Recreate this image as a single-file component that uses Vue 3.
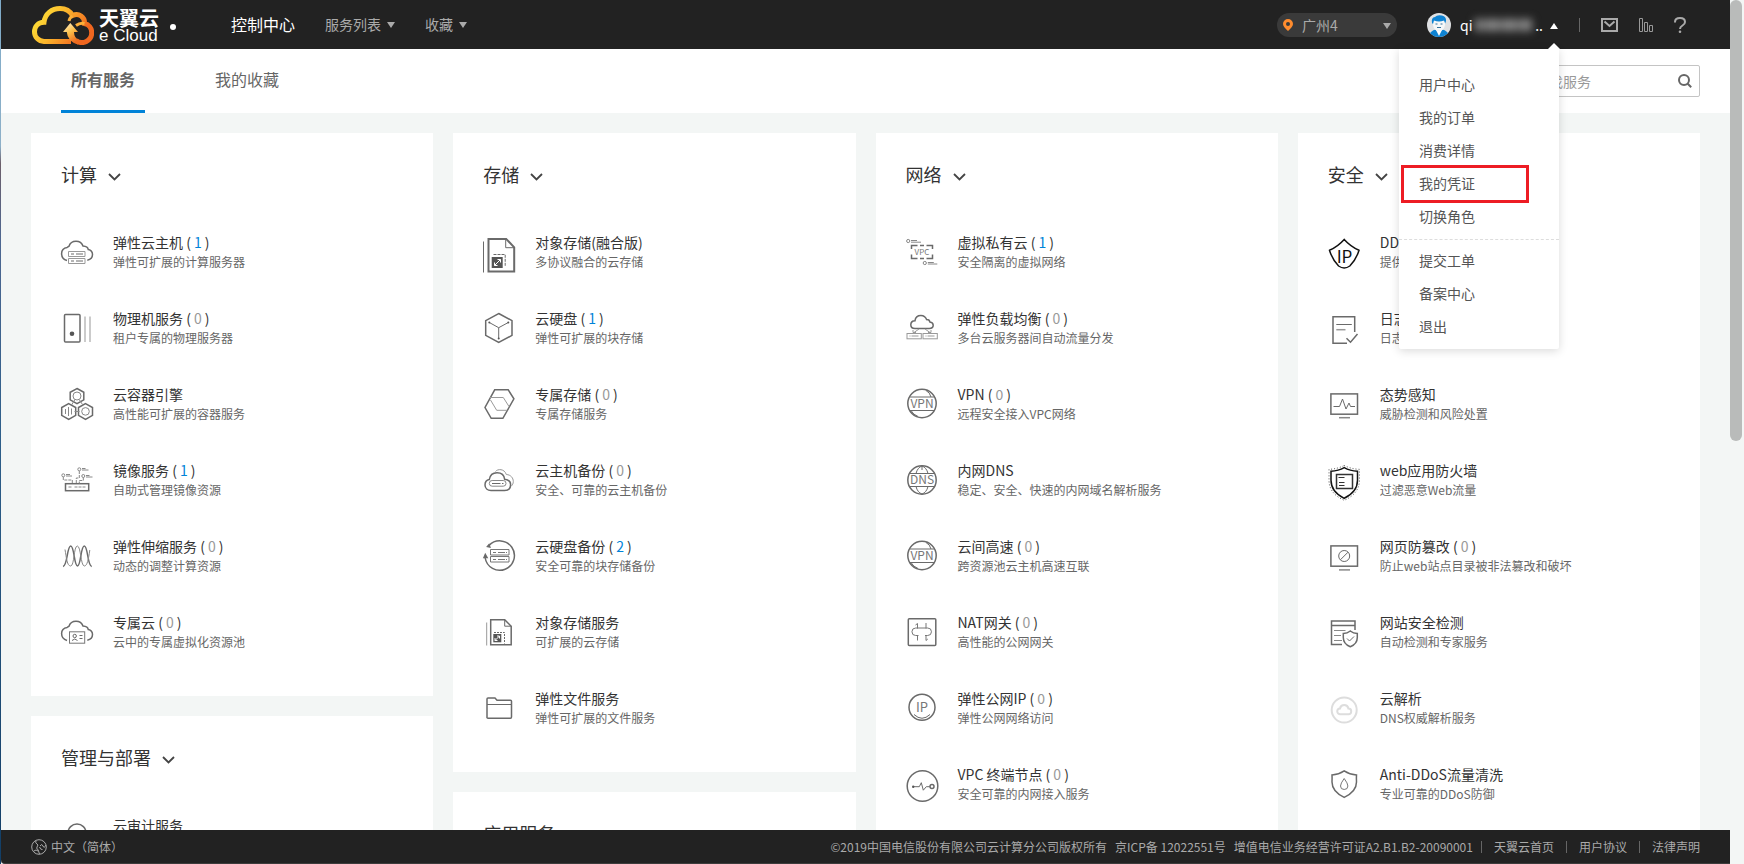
<script setup>
import { ref } from 'vue'

const CLOUD = '<path d="M6 23.5C2.6 22.6.6 20 .6 16.6c0-3.4 2.4-5.8 5.6-6.2L8 9.200C9 6 11.800 4.200 15 4.200c3.400 0 6 1.900 7 4.800 3.300.2 5 1.600 5.300 3.600 2.600.6 4.200 2.300 4.200 5 0 2.600-1.900 4.900-5.200 5.600"/>'
const VPN = '<circle cx="16" cy="14.500" r="14.200"/><path d="M3.500 8h25M3.500 21.500h25M20 1.500q4 2 5 6.500M5 21.500q2 4 7 6" stroke-width="1"/><text x="16" y="18.800" font-size="12">VPN</text>'
const DOC = '<path d="M7.700 2.700h14l6.500 6.500v18.500H7.700z"/><path d="M21.700 2.700v6.500h6.500" stroke-width="1"/><path d="M11 15.500h10.500v11" stroke-width="1" stroke-dasharray="2 1"/><path d="M3.700 5.500v23" stroke="#999" stroke-width="1"/><path d="M10.300 17h8v8.300h-8z" fill="#555" stroke="none"/><path d="M12 23.500l4.500-4.500M14 19h2.500v2.500M12 21v2.500h2.500" stroke="#fff" stroke-width="1"/>'

const icons = {
  server: CLOUD + '<path d="M7.500 14.500h16.500v5H7.500zM7.500 21.500h16.500v5H7.500z" stroke="#999" stroke-width="1"/><path d="M10 17h3m2 0h7M10 24h3m2 0h7" stroke-width="1"/>',
  physical: '<rect x="3.500" y="1.500" width="15.500" height="27.500" rx="1"/><circle cx="11" cy="20.700" r="2.300" fill="#555" stroke="none"/><path d="M24 3.500v25.500M29 3.500v25.500" stroke="#bbb"/>',
  container: '<path d="M16-.5l6.800 3.800v7.600L16 14.700l-6.800-3.800V3.300zM7.700 14.700l7 3.800v7.800l-7 4-7-4v-7.800zM24.500 14.700l7 3.800v7.800l-7 4-7-4v-7.800z"/><g stroke-width="1" stroke="#888"><circle cx="16" cy="7" r="4"/><circle cx="24.500" cy="22.400" r="3.800"/><path d="M14 10.500l-3.500 5.500M18.500 11l3 4.500M13.500 22.500h5M4.500 20v5M7.500 18v9M10.500 19.500v6"/></g>',
  image: '<rect x="4.500" y="18.700" width="23.200" height="7"/><path d="M7.500 22h4m2 0h12M2.300 12v3h9v3M18.300 6v7h-3v5M22.300 12.500v3h-4v3" stroke="#888" stroke-width="1" stroke-dasharray="3 1"/><g stroke="#888" stroke-width="1"><circle cx="2.300" cy="10.300" r="1.500"/><circle cx="18.300" cy="4.300" r="1.500"/><circle cx="22.300" cy="11" r="1.500"/><path d="M5 9.500h4M5 11h6M21 3.500h3.500M21 5h6.500M25 10.500h3.500M25 12h6.500"/></g>',
  scaling: '<path d="M2 25.500C6.500 25 6 5 9.700 5s3.300 20 6.800 20S19.600 5 23.300 5s3.200 20.500 7.500 20.500"/><path d="M4 8.500C5.500 17 6 25 9.700 25s3-20 6.600-20 3.400 20 7 20c3 0 4.200-7 5.500-16" stroke="#888" stroke-width="1"/>',
  dedicated: CLOUD + '<rect x="8.500" y="14.800" width="15.200" height="11.400" fill="#fff" stroke="#777" stroke-width="1"/><g stroke-width="1"><circle cx="13.700" cy="19" r="1.700"/><path d="M11 23.500q2.700-3 5.500 0M18.500 18.500h3M18.500 21.500h3"/></g>',
  audit: '<circle cx="16" cy="13" r="9"/><path d="M22 20l7 7"/>',
  objectFused: '<path d="M5.500 1.900h17.700l8 8.500v24H5.500z" stroke-width="2"/><path d="M22.700 2v8.700h8.500" stroke-width="1"/><path d="M10.500 17.500h11.700v12" stroke-dasharray="3 1" stroke-width="1"/><path d="M.5 4.500v31" stroke-width="1"/><path d="M8.700 20h11v11h-11z" fill="#555" stroke="none"/><path d="M11.500 28.500l6-6M14.500 22.500h3v3M11.500 25.500v3h3" stroke="#fff" stroke-width="1"/>',
  disk: '<path d="M15.700.5L29 7.600v14.800L15.700 29.500 2.700 22.400V7.600z"/><path d="M6.300 9.500l9.400 5.200 9.600-5.200M15.700 14.700v11" stroke-width="1"/><g fill="#555" stroke="none"><circle cx="6.300" cy="9.500" r="1"/><circle cx="25.300" cy="9.500" r="1"/><circle cx="15.700" cy="25.500" r="1"/></g>',
  dedicatedDisk: '<path d="M11.700.8h13.500l5.700 9-11 19.500H8.200L2 18.500z"/><path d="M7 8.500h13.300l5.700 9M7.500 11l6.200 10.300h10.500" stroke="#999" stroke-width="1"/>',
  cloudBackup: '<path d="M8 25.500c-3.500 0-6-2.300-6-5.500 0-3 1.700-5 4.300-5.500C7 10 9.700 7.700 14 7.700c4.200 0 7.200 2.400 7.600 6.500 3.700.5 6 2.500 6 5.500 0 3.500-2.300 5.800-6 5.800z"/><path d="M12.500 6.500c2-2.800 9-3 10.800 3 4.500.2 7 3.500 7 7 0 2-.8 3.500-2 4.500" stroke="#999" stroke-width="1"/><rect x="6.300" y="15.500" width="16.700" height="5.700" rx="2.800" stroke="#888" stroke-width="1"/><path d="M9 18.500h8.500m1.500 0h1.500" stroke-width="1"/>',
  diskBackup: '<path d="M6 4.500A14.700 14.700 0 1 1 2.200 17"/><path d="M1 16.500l1.300-3 1.700 3zM4.500 5.500l1.500-1.800.8 2.300z" fill="#555"/><g stroke="#777" stroke-width="1"><path d="M7.500 8.500h18.500v5.500H7.500zM7.500 15.500h18.500v5.500H7.500z"/><path d="M10 11.500h3m2 0h7m1 0h1M10 18.500h3m2 0h7m1 0h1"/></g>',
  object: DOC,
  folder: '<path d="M4 25V6q0-1 1-1h7l2 2.200h13.500q1 0 1 1V24q0 1.200-1 1.200H5q-1 0-1-1z"/><path d="M4 11.500h24.500" stroke-width="1"/>',
  vpc: '<path d="M5.500 12V8.500h6M14 8.500h4M20.500 8.500h6V12M5.500 17.500v4h6M20.500 21.500h6v-4M14 21.500h4"/><text x="16" y="18" font-size="8">VPC</text><g stroke="#888" stroke-width="1"><circle cx="2.200" cy="4" r="1.600"/><circle cx="18.800" cy="26" r="1.600"/><path d="M5 3.500h6M5 5.200h10M21.800 25.500h6M21.800 27h9.500"/></g>',
  elb: '<path d="M9 15.500c-2.700 0-4.200-1.600-4.200-3.800S6.500 7.800 9 7.700c.4-3.300 3-5.300 5.900-5.300 3 0 4.800 1.500 5.700 4.200 2-.1 3 .7 3.200 2.300 2 .3 3.400 1.500 3.400 3.400 0 2-1.700 3.200-4 3.200z"/><g stroke="#999" stroke-width="1"><rect x="1" y="20.500" width="14.300" height="5.300"/><rect x="17" y="20.500" width="14.300" height="5.300"/><path d="M3.500 23h1m1 0h7M19.500 23h1m1 0h7M13 16l-5 3.500M19 16l5 3.500M7 17v2.500h3M25 17v2.500h-3"/></g>',
  vpn: VPN,
  dns: '<circle cx="16" cy="15" r="14.200"/><path d="M3.300 8.500h25.400M3.300 21.500h25.400M16 1v4M10 8.500q1.500-6 6-7.500 4.500 1.500 6 7.500M10 21.500q1.500 6 6 7.500 4.500-1.500 6-7.500" stroke-width="1"/><text x="16" y="19" font-size="12">DNS</text>',
  nat: '<rect x="2.300" y="1.700" width="27.500" height="26.700" rx="1"/><path d="M11.500 11.500V6.500l-2 1.500M20 6v5.500M11.500 18.500v5M20 18.500v5l1.800-1.500M12.500 18.500H9.700a3.500 3.500 0 0 1 0-7.500h12a3.500 3.500 0 0 1 0 7.500H19" stroke="#777" stroke-width="1"/>',
  ip: '<circle cx="16" cy="14.300" r="13"/><path d="M8 21.500q8 7.500 16 0" stroke-width="1"/><text x="16" y="18.500" font-size="13">IP</text>',
  endpoint: '<circle cx="16.500" cy="17" r="15.300"/><path d="M7 17.700h6.300l2-4 2 7.500 3-3.500h3.500" stroke-width="1"/><circle cx="7.200" cy="17.700" r="1.200" fill="#555" stroke="none"/><circle cx="26" cy="17.500" r="2"/>',
  ddos: '<path d="M16.200 2.500Q22.500 9.500 31 13.300 28.500 22 21.800 29q-5.600 4-11.200 0Q4 22 1.500 13.300 10 9.500 16.200 2.500z" stroke="#111"/><text x="16.500" y="25.500" font-size="17" class="dark">IP</text>',
  log: '<path d="M26.700 19V3.700H5v26.500h14"/><path d="M8.300 11.500h15.500" stroke-width="1"/><path d="M8.300 16.700h9.200" stroke="#999"/><path d="M18.500 25.300l4 3.900L29.500 21"/>',
  situation: '<rect x="2.900" y="4.900" width="26.600" height="20.300"/><path d="M5.500 17.500h6l3-7.500 3.500 10 3-6 1.500 3.500h4.500" stroke-width="1"/><path d="M11 28.700h11" stroke="#888"/>',
  waf: '<path d="M16.200 2.700c4 2.300 8.500 3.400 13.300 3.600v9c0 8-5 14-13.300 18C8 29.300 3 23.300 3 15.300v-9c4.800-.2 9.200-1.300 13.200-3.600z" stroke="#111"/><path d="M16.200.5c4 2 9 3.600 15.200 3.800v11c0 9.500-6 16-15.200 20C7 31.300 1 24.800 1 15.300v-11C7.200 4.100 12.200 2.500 16.200.5z" stroke="#555" stroke-width="1" stroke-dasharray="1 2"/><path d="M8.500 9.500h16v14h-16z" stroke="#333"/><path d="M10.500 12.500h6M11 17.500h5.500M11 20.500h5.500" stroke="#333" stroke-width="1"/>',
  tamper: '<rect x="2.900" y="4.900" width="26.600" height="20.300"/><circle cx="16.200" cy="15" r="5.500" stroke-width="1"/><path d="M12.500 18.700l7.500-7.500" stroke-width="1"/><path d="M11 28.900h11" stroke="#888"/>',
  scan: '<path d="M27 13V4H3.500v23.500H14M3.500 8.500H27"/><path d="M6 13.500h11.500M6 18.500h7M6 23.500h8" stroke="#888" stroke-width="1"/><path d="M22.300 14q3 2.300 7 2.500v4q0 6.500-7 9.200-7-2.700-7-9.200v-4q4-.2 7-2.500z"/><path d="M19 21.500l2.500 2.500 4.500-4.500" stroke-width="1"/>',
  resolve: '<circle cx="16.200" cy="17" r="12.500" stroke="#ddd" stroke-width="2"/><path d="M12.300 21.300a2.900 2.900 0 0 1-.3-5.800 4.300 4.300 0 0 1 8.400 0 2.900 2.900 0 0 1-.2 5.800z" stroke="#ddd" stroke-width="2"/>',
  anti: '<path d="M16.200 1.800q5.500 3.700 12.300 4.200-.2 3 0 7 0 9.500-12.300 15.400Q4 22.500 4 13q.2-4 0-7 6.700-.5 12.200-4.200z"/><path d="M16.200 9.500q3.700 5 3.700 7.500a3.700 3.500 0 0 1-7.400 0q0-2.500 3.700-7.500z" stroke="#777" stroke-width="1"/>'
}

const columns = [
  [
    {
      title: '计算',
      items: [
        { icon: 'server', name: '弹性云主机', count: 1, desc: '弹性可扩展的计算服务器' },
        { icon: 'physical', name: '物理机服务', count: 0, desc: '租户专属的物理服务器' },
        { icon: 'container', name: '云容器引擎', desc: '高性能可扩展的容器服务' },
        { icon: 'image', name: '镜像服务', count: 1, desc: '自助式管理镜像资源' },
        { icon: 'scaling', name: '弹性伸缩服务', count: 0, desc: '动态的调整计算资源' },
        { icon: 'dedicated', name: '专属云', count: 0, desc: '云中的专属虚拟化资源池' }
      ]
    },
    { title: '管理与部署', items: [{ icon: 'audit', name: '云审计服务' }] }
  ],
  [
    {
      title: '存储',
      items: [
        { icon: 'objectFused', name: '对象存储(融合版)', desc: '多协议融合的云存储' },
        { icon: 'disk', name: '云硬盘', count: 1, desc: '弹性可扩展的块存储' },
        { icon: 'dedicatedDisk', name: '专属存储', count: 0, desc: '专属存储服务' },
        { icon: 'cloudBackup', name: '云主机备份', count: 0, desc: '安全、可靠的云主机备份' },
        { icon: 'diskBackup', name: '云硬盘备份', count: 2, desc: '安全可靠的块存储备份' },
        { icon: 'object', name: '对象存储服务', desc: '可扩展的云存储' },
        { icon: 'folder', name: '弹性文件服务', desc: '弹性可扩展的文件服务' }
      ]
    },
    { title: '应用服务', items: [] }
  ],
  [
    {
      title: '网络',
      items: [
        { icon: 'vpc', name: '虚拟私有云', count: 1, desc: '安全隔离的虚拟网络' },
        { icon: 'elb', name: '弹性负载均衡', count: 0, desc: '多台云服务器间自动流量分发' },
        { icon: 'vpn', name: 'VPN', count: 0, desc: '远程安全接入VPC网络' },
        { icon: 'dns', name: '内网DNS', desc: '稳定、安全、快速的内网域名解析服务' },
        { icon: 'vpn', name: '云间高速', count: 0, desc: '跨资源池云主机高速互联' },
        { icon: 'nat', name: 'NAT网关', count: 0, desc: '高性能的公网网关' },
        { icon: 'ip', name: '弹性公网IP', count: 0, desc: '弹性公网网络访问' },
        { icon: 'endpoint', name: 'VPC 终端节点', count: 0, desc: '安全可靠的内网接入服务' }
      ]
    }
  ],
  [
    {
      title: '安全',
      items: [
        { icon: 'ddos', name: 'DDoS', desc: '提供' },
        { icon: 'log', name: '日志', desc: '日志' },
        { icon: 'situation', name: '态势感知', desc: '威胁检测和风险处置' },
        { icon: 'waf', name: 'web应用防火墙', desc: '过滤恶意Web流量' },
        { icon: 'tamper', name: '网页防篡改', count: 0, desc: '防止web站点目录被非法篡改和破坏' },
        { icon: 'scan', name: '网站安全检测', desc: '自动检测和专家服务' },
        { icon: 'resolve', name: '云解析', desc: 'DNS权威解析服务' },
        { icon: 'anti', name: 'Anti-DDoS流量清洗', desc: '专业可靠的DDoS防御' }
      ]
    }
  ]
]

const menuGroups = [
  ['用户中心', '我的订单', '消费详情', '我的凭证', '切换角色'],
  ['提交工单', '备案中心', '退出']
]
const highlighted = '我的凭证'
const keyword = ref('')
</script>

<template>
  <div class="screen">
    <div class="page">
      <header class="topbar">
        <a class="logo" href="#">
          <svg class="logo-mark" viewBox="0 0 62 40" aria-hidden="true">
            <defs>
              <linearGradient id="gold" x1="0" y1="0" x2="1" y2="0.4">
                <stop offset="0" stop-color="#fdea3a" />
                <stop offset="0.5" stop-color="#fcb62c" />
                <stop offset="1" stop-color="#f0661f" />
              </linearGradient>
              <linearGradient id="arrow" x1="0" y1="0" x2="0.5" y2="1">
                <stop offset="0" stop-color="#fff6d8" />
                <stop offset="0.5" stop-color="#fdc04a" />
                <stop offset="1" stop-color="#ee6a1e" />
              </linearGradient>
            </defs>
            <path d="M39 36.500H12A10 9.500 0 0 1 2.500 27C2.500 21.500 6 17.500 12 17.300C13 8.500 20 3.500 28 3.500C33.500 3.500 38 6 40.500 10.500C47 7.500 53 12 52.500 18.500C57 19.500 59.700 23 59.700 27.500A9.800 9.800 0 0 1 44 35.500" fill="none" stroke="url(#gold)" stroke-width="5" />
            <path d="M40.500 11Q37.500 12.500 37 16M52.500 18.500Q48 17.500 44 20.500" fill="none" stroke="#fcb03a" stroke-width="3" />
            <path d="M38.300 18L46 27H42Q42 33 47.500 35.500L46 39.500Q35.500 36.500 34.800 27H31z" fill="url(#arrow)" />
          </svg>
          <span class="logo-words">
            <strong>天翼云</strong>
            <span>e Cloud</span>
          </span>
          <i class="logo-dot"></i>
        </a>
        <nav class="mainnav">
          <a class="home" href="#">控制中心</a>
          <a href="#">服务列表<i class="caret"></i></a>
          <a href="#">收藏<i class="caret"></i></a>
        </nav>
        <button class="region" type="button">
          <svg class="pin" viewBox="0 0 10 12" aria-hidden="true"><path d="M5 0a5 5 0 0 1 5 5c0 2.600-2.500 4.500-5 7C2.500 9.500 0 7.600 0 5a5 5 0 0 1 5-5zm0 3a2 2 0 1 0 0 4 2 2 0 0 0 0-4z" fill="#ff8c2e" fill-rule="evenodd" /></svg>
          <span>广州4</span>
          <i class="caret"></i>
        </button>
        <div class="account">
          <button class="user" type="button" aria-expanded="true">
            <svg class="avatar" viewBox="0 0 24 24" aria-hidden="true">
              <clipPath id="round"><circle cx="12" cy="12" r="12" /></clipPath>
              <g clip-path="url(#round)">
                <path d="M0 0h24v24H0z" fill="#dfe1e3" />
                <path d="M1 24Q3 17.500 9 16.500h6q6 1 8 7.500z" fill="#0e83d3" />
                <path d="M8.500 16h7L12 23z" fill="#fff" />
                <path d="M6 8h12v4q-1 6-6 6t-6-6z" fill="#f5f7f8" />
                <path d="M5 10Q4 4.500 8 4q2-2.500 7-1.500 4.500 1 4 5.500l-.8 2.500L17 7.500Q12 9.500 7 7.500L6 11z" fill="#0e83d3" />
                <path d="M8.500 11h2M13.500 11h2M10 14.500h4" stroke="#35739c" />
              </g>
            </svg>
            <span class="user-name">qi<i class="mask"></i>..</span>
            <i class="caret up"></i>
          </button>
          <div class="menu">
            <ul v-for="(group, g) in menuGroups" :key="g">
              <li v-for="entry in group" :key="entry">
                <a href="#" :class="{ marked: entry === highlighted }">{{ entry }}</a>
              </li>
            </ul>
          </div>
        </div>
        <div class="tools">
          <button type="button" aria-label="消息">
            <svg width="17" height="14" viewBox="0 0 17 14"><path d="M1 1h15v12H1zM3.500 3.500l5 4.500 5-4.500" fill="none" stroke="#aaa" stroke-width="2" /></svg>
          </button>
          <button type="button" aria-label="监控">
            <svg width="14" height="14" viewBox="0 0 14 14"><path d="M.5.5h3v13h-3zM5.500 4.500h3v9h-3zM10.500 7.500h3v6h-3z" fill="none" stroke="#999" /></svg>
          </button>
          <button type="button" aria-label="帮助">
            <svg width="12" height="16" viewBox="0 0 12 16"><path d="M1 5.500V5q0-4 5-4t5 4q0 2-2.500 3.500T6 12" fill="none" stroke="#aaa" stroke-width="2" /><circle cx="6" cy="14.700" r="1.300" fill="#aaa" /></svg>
          </button>
        </div>
      </header>

      <div class="subnav">
        <nav class="tabs">
          <a class="active" href="#">所有服务</a>
          <a href="#">我的收藏</a>
        </nav>
        <form class="search" @submit.prevent>
          <input v-model="keyword" type="text" placeholder="查找服务" aria-label="查找服务" />
          <button type="submit" aria-label="搜索">
            <svg width="14" height="14" viewBox="0 0 14 14"><circle cx="6" cy="6" r="5" fill="none" stroke="#666" stroke-width="2" /><path d="M9.500 9.500l3.700 3.700" stroke="#666" stroke-width="2" /></svg>
          </button>
        </form>
      </div>

      <main class="board">
        <div v-for="(column, c) in columns" :key="c" class="column">
          <section v-for="card in column" :key="card.title" class="card">
            <h2>
              {{ card.title }}
              <svg class="chevron" viewBox="0 0 13 8" aria-hidden="true"><path d="M1 1l5.500 5.500L12 1" fill="none" stroke="#444" stroke-width="1.800" /></svg>
            </h2>
            <a v-for="item in card.items" :key="item.name" class="item" href="#">
              <svg class="icon" viewBox="0 0 32 32" aria-hidden="true" v-html="icons[item.icon]"></svg>
              <span class="label">
                <span class="name">{{ item.name }}<template v-if="item.count !== undefined"> (<span class="count" :class="{ some: item.count > 0 }">{{ item.count }}</span>)</template></span>
                <span class="desc">{{ item.desc }}</span>
              </span>
            </a>
          </section>
        </div>
      </main>

      <footer class="bottombar">
        <a class="language" href="#">
          <svg width="16" height="16" viewBox="0 0 16 16" aria-hidden="true"><circle cx="8" cy="8" r="7.300" fill="none" stroke="#aaa" /><path d="M5 1.500q-1 3 1 3.500t0 3q-1 2 1 2.500l1.500 4.500M3 12q2-2 4 0M9 7q2-3 3 0t3-1M8.500 8q1 3 3 2.500" fill="none" stroke="#aaa" /></svg>
          中文（简体）
        </a>
        <p class="legal">
          <span>©2019中国电信股份有限公司云计算分公司版权所有</span>
          <span>京ICP备 12022551号</span>
          <span>增值电信业务经营许可证A2.B1.B2-20090001</span>
        </p>
        <a class="link" href="#">天翼云首页</a>
        <a class="link" href="#">用户协议</a>
        <a class="link" href="#">法律声明</a>
      </footer>
    </div>
    <div class="scrollbar"><div class="thumb"></div></div>
  </div>
</template>

<style>
body {
  overflow: hidden;
}
</style>

<style scoped>
.screen {
  display: flex;
  height: 100vh;
  box-sizing: border-box;
  border-left: 1px solid;
  border-image: linear-gradient(#7fabc9 0, #8db0c8 17%, #6c5f6a 19%, #4d6791 28%, #2e5f8a 50%, #123e66 100%) 1;
  background: #f3f6f5;
  color: #333;
  font-family: "Noto Sans CJK SC", "Noto Sans", sans-serif;
  font-size: 14px;
}
a { color: inherit; text-decoration: none; }
button {
  padding: 0;
  border: 0;
  background: none;
  color: inherit;
  font: inherit;
  cursor: pointer;
}
svg { display: block; flex: none; }

.page {
  display: flex;
  flex: 1;
  flex-direction: column;
  min-width: 0;
}
.scrollbar { width: 14px; }
.thumb {
  width: 12px;
  height: 51%;
  border-radius: 6px;
  background: #b9bbba;
}

.topbar {
  position: relative;
  z-index: 2;
  display: flex;
  align-items: center;
  height: 49px;
  flex: none;
  padding-right: 44px;
  background: #222;
  color: #aaa;
}
.logo {
  display: flex;
  align-items: center;
  padding-left: 31px;
  color: #fff;
}
.logo-mark { width: 62px; height: 40px; }
.logo-words {
  display: flex;
  flex-direction: column;
  width: 60px;
  margin-left: 5px;
  padding-top: 2px;
  font-size: 20px;
  line-height: 20px;
  white-space: nowrap;
}
.logo-words span {
  font-family: "Liberation Sans", Arial, sans-serif;
  font-size: 17px;
  line-height: 16px;
}
.logo-dot {
  width: 6px;
  height: 6px;
  margin-top: 4px;
  margin-left: 11px;
  border-radius: 50%;
  background: #fff;
}
.mainnav {
  display: flex;
  flex: 1;
  align-items: center;
  gap: 30px;
  margin-left: 55px;
  padding-bottom: 2px;
}
.mainnav a { display: flex; align-items: center; }
.mainnav .home { color: #fff; font-size: 16px; }
.caret {
  width: 0;
  height: 0;
  margin-top: 3px;
  margin-left: 6px;
  border: 4px solid transparent;
  border-top: 6px solid #aaa;
  border-bottom: 0;
}
.caret.up {
  border-top: 0;
  border-bottom: 6px solid #fff;
}
.region {
  display: flex;
  align-items: center;
  width: 120px;
  height: 24px;
  padding: 0 6px;
  border-radius: 12px;
  background: #3a3a3a;
}
.region span { flex: 1; margin-left: 9px; text-align: left; }
.pin { width: 10px; height: 12px; }

.account { position: relative; margin-left: 30px; }
.user {
  display: flex;
  align-items: center;
  height: 49px;
  color: #fff;
}
.avatar { width: 24px; height: 24px; }
.user-name {
  display: flex;
  align-items: center;
  width: 83px;
  margin-left: 9px;
}
.user .caret { margin-left: 7px; }
.mask {
  width: 60px;
  height: 12px;
  margin: 0 3px 0 2px;
  background: repeating-linear-gradient(90deg, #999 0 5px, #555 5px 8px, #888 8px 12px, #777 12px 17px);
  filter: blur(4px);
}
.menu {
  position: absolute;
  top: 49px;
  right: -1px;
  width: 160px;
  padding: 19px 0 6px;
  box-sizing: border-box;
  border-radius: 0 0 2px 2px;
  background: #fff;
  box-shadow: 0 2px 10px rgba(0, 0, 0, 0.15);
  color: #555;
}
.menu::before {
  content: "";
  position: absolute;
  top: -6px;
  right: -1px;
  border: 6px solid transparent;
  border-top: 0;
  border-bottom-color: #fff;
}
.menu ul {
  margin: 0;
  padding: 0;
  list-style: none;
}
.menu ul + ul {
  margin-top: 6px;
  padding-top: 4px;
  border-top: 1px dashed #ddd;
}
.menu a {
  position: relative;
  display: block;
  padding-left: 20px;
  line-height: 33px;
}
.menu .marked::after {
  content: "";
  position: absolute;
  inset: -2px 30px -3px 2px;
  border: 3px solid #ed1c24;
}
.tools {
  display: flex;
  align-items: center;
  gap: 21px;
  height: 14px;
  margin-left: 21px;
  padding-left: 21px;
  border-left: 1px solid #666;
}

.subnav {
  display: flex;
  justify-content: space-between;
  align-items: center;
  flex: none;
  height: 64px;
  padding: 0 30px 0 60px;
  background: #fff;
}
.tabs {
  display: flex;
  align-self: stretch;
  gap: 60px;
  color: #666;
  font-size: 16px;
}
.tabs a {
  box-sizing: border-box;
  padding: 0 10px;
  border-bottom: 3px solid transparent;
  line-height: 60px;
}
.tabs .active { border-color: #0083d8; font-weight: bold; }
.search {
  display: flex;
  align-items: center;
  box-sizing: border-box;
  width: 176px;
  height: 32px;
  padding: 0 7px 0 10px;
  border: 1px solid #c4c4c4;
  border-radius: 2px;
}
.search input {
  flex: 1;
  min-width: 0;
  padding: 0;
  border: 0;
  outline: 0;
  background: none;
  font: inherit;
  line-height: 28px;
}
.search input::placeholder { color: #999; opacity: 1; }

.board {
  display: grid;
  flex: 1;
  grid-template-columns: repeat(4, minmax(0, 1fr));
  gap: 20px;
  min-height: 0;
  padding: 20px 30px 0;
  overflow: hidden;
}
.column {
  display: flex;
  flex-direction: column;
  gap: 20px;
}
.card {
  flex: none;
  padding: 0 30px 25px;
  background: #fff;
}
.card h2 {
  display: flex;
  align-items: center;
  gap: 11px;
  height: 82px;
  margin: 0;
  font-size: 18px;
  font-weight: normal;
}
.chevron { width: 13px; height: 8px; margin-top: 6px; }
.item {
  display: flex;
  align-items: center;
  gap: 20px;
  height: 76px;
}
.icon {
  width: 32px;
  height: 32px;
  overflow: visible;
  fill: none;
  stroke: #6a6a6a;
  stroke-width: 1.5px;
}
.icon :deep([stroke-width="1"]) { stroke-width: 1px; }
.icon :deep([stroke-width="2"]) { stroke-width: 2px; }
.icon :deep(text) {
  fill: #777;
  stroke: none;
  text-anchor: middle;
  font-family: "Noto Sans CJK SC", sans-serif;
}
.icon :deep(.dark) { fill: #111; }
.label {
  display: flex;
  flex-direction: column;
  padding-bottom: 2px;
  line-height: 20px;
  white-space: nowrap;
}
.desc { min-height: 20px; color: #666; font-size: 12px; }
.count { margin: 0 3px; color: #999; }
.count.some { color: #0083d8; }

.bottombar {
  display: flex;
  position: relative;
  align-items: center;
  flex: none;
  height: 34px;
  box-sizing: border-box;
  padding: 0 30px;
  border-bottom: 1px solid #3c3c3c;
  border-bottom-left-radius: 4px;
  background: #222;
  color: #aaa;
  font-size: 12px;
}
.language {
  display: flex;
  align-items: center;
  flex: 1;
  gap: 4px;
}
.legal {
  display: flex;
  gap: 8px;
  margin: 0;
  padding-right: 8px;
}
.link {
  display: flex;
  align-items: center;
}
.link::before {
  content: "";
  width: 1px;
  height: 12px;
  margin-right: 12px;
  background: #666;
}
.link + .link { margin-left: 12px; }
</style>
